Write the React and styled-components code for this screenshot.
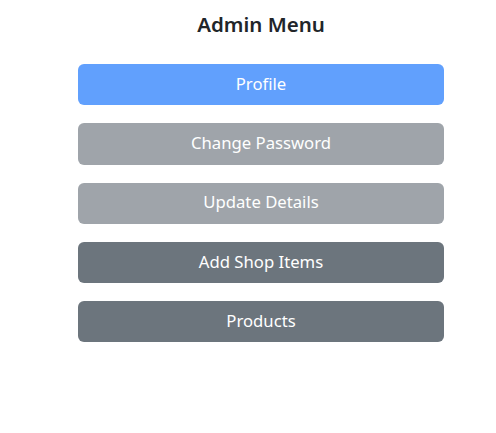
import React from "react";
import styled, { createGlobalStyle } from "styled-components";

const Global = createGlobalStyle`
  html, body { margin: 0; padding: 0; background: #fff; }
  body { font-family: "Noto Sans", "Liberation Sans", sans-serif; }
`;

const Page = styled.div`
  width: 366px;
  margin-left: 78px;
  padding-top: 12px;
  display: flex;
  flex-direction: column;
`;

const Title = styled.h4`
  margin: 0 0 28px;
  font-size: 20.5px;
  line-height: 24px;
  font-weight: 600;
  color: #212529;
  text-align: center;
`;

const List = styled.div`
  display: flex;
  flex-direction: column;
  gap: 18px;
`;

const colors = {
  primary: "#0d6efd",
  secondary: "#6c757d",
};

const MenuButton = styled.button`
  height: 41.25px;
  border: none;
  border-radius: 6px;
  background: ${(p) => colors[p.$variant]};
  opacity: ${(p) => (p.$disabled ? 0.65 : 1)};
  color: #fff;
  font-family: inherit;
  font-size: 16.7px;
  line-height: 1.4;
  padding: 0 12px 2px;
  cursor: pointer;
`;

const items = [
  { label: "Profile", variant: "primary", disabled: true },
  { label: "Change Password", variant: "secondary", disabled: true },
  { label: "Update Details", variant: "secondary", disabled: true },
  { label: "Add Shop Items", variant: "secondary", disabled: false },
  { label: "Products", variant: "secondary", disabled: false },
];

export default function App() {
  return (
    <>
      <Global />
      <Page>
        <Title>Admin Menu</Title>
        <List>
          {items.map((it) => (
            <MenuButton key={it.label} $variant={it.variant} $disabled={it.disabled}>
              {it.label}
            </MenuButton>
          ))}
        </List>
      </Page>
    </>
  );
}
